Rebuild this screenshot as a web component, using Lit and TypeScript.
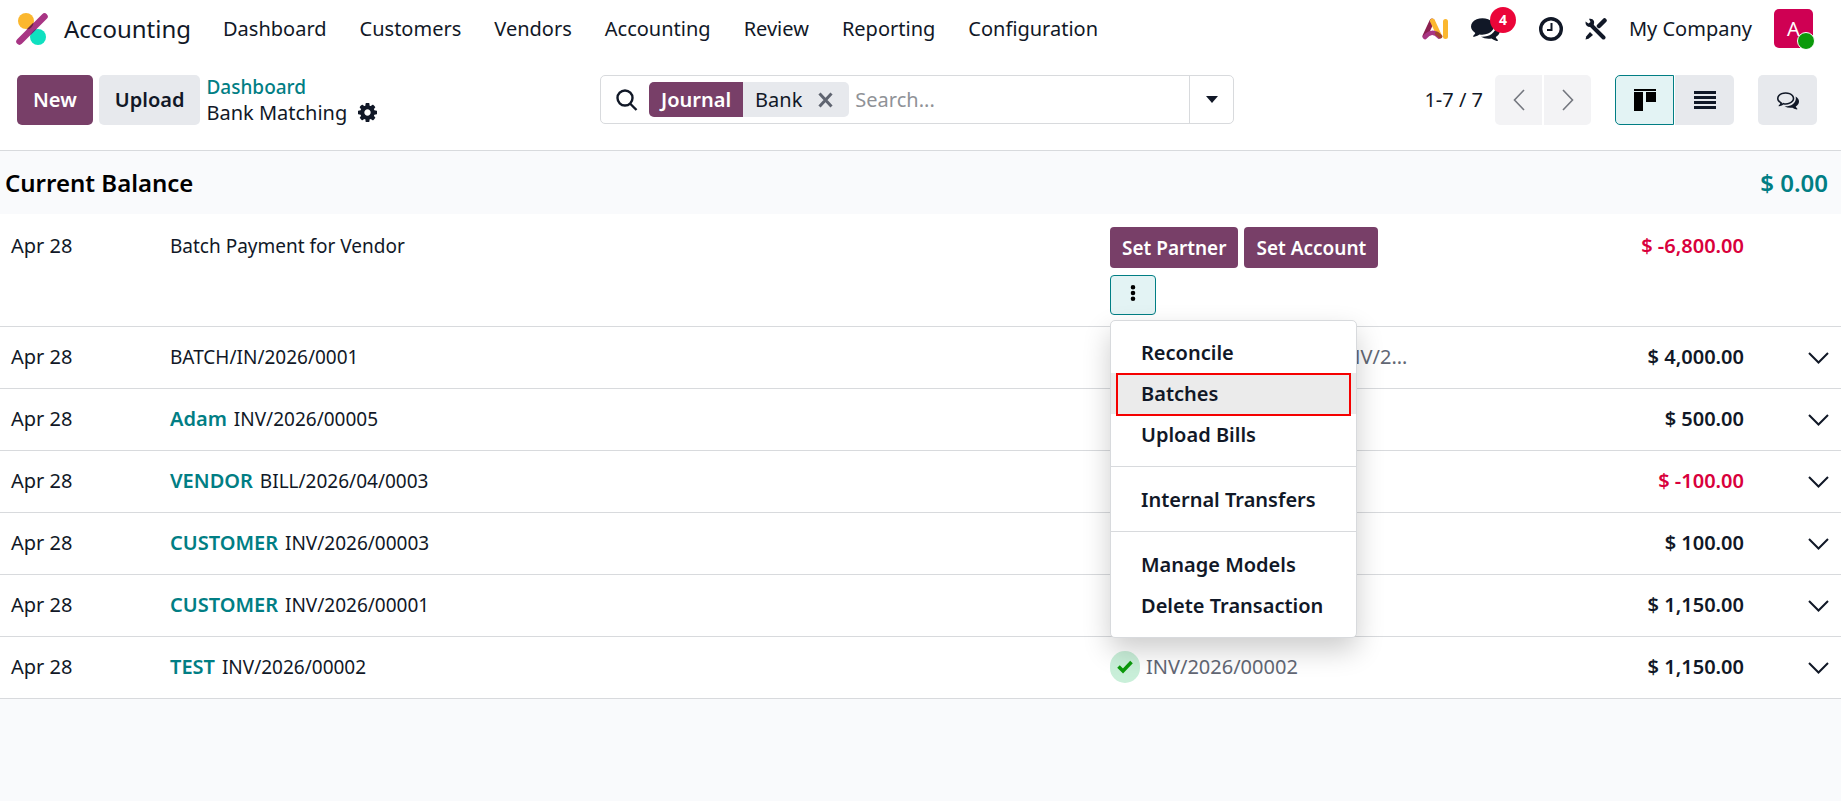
import { LitElement, html, css, nothing } from "lit";
import { customElement } from "lit/decorators.js";
import { classMap } from "lit/directives/class-map.js";

interface Line {
  partner?: string;
  label: string;
  amount: string;
  negative?: boolean;
  matched?: string;
  open?: boolean;
}

const LINES: Line[] = [
  { label: "Batch Payment for Vendor", amount: "$ -6,800.00", negative: true, open: true },
  { label: "BATCH/IN/2026/0001", amount: "$ 4,000.00", matched: "PBNK1/2026/00004, INV/2…" },
  { partner: "Adam", label: "INV/2026/00005", amount: "$ 500.00" },
  { partner: "VENDOR", label: "BILL/2026/04/0003", amount: "$ -100.00", negative: true },
  { partner: "CUSTOMER", label: "INV/2026/00003", amount: "$ 100.00" },
  { partner: "CUSTOMER", label: "INV/2026/00001", amount: "$ 1,150.00" },
  { partner: "TEST", label: "INV/2026/00002", amount: "$ 1,150.00", matched: "INV/2026/00002" },
];

const SECTIONS = ["Dashboard", "Customers", "Vendors", "Accounting", "Review", "Reporting", "Configuration"];
const MENU = [["Reconcile", "Batches", "Upload Bills"], ["Internal Transfers"], ["Manage Models", "Delete Transaction"]];

const BUBBLE =
  "M704 256q191 0 353.500 68.500t256.500 186.500 94 257-94 257-256.500 186.500-353.500 68.500q-86 0-176-16-124 88-278 128-36 9-86 16h-3q-11 0-20.500-8t-11.500-21q-1-3-1-6.500t.5-6.500 2-6l2.500-5 3.500-5.500 4-5 4.500-5 4-4.500q5-6 23-25t26-29.500 22.500-29 25-38.500 20.500-44q-124-72-195-177t-71-224q0-139 94-257t256.500-186.500 353.500-68.500z";
const BUBBLE_HOLE =
  "M704 384q-153 0-286 52t-211.500 141-78.500 191q0 82 53 158t149 132l97 56-35 84q34-20 62-39l44-31 53 10q78 14 153 14 153 0 286-52t211.500-141 78.500-191-78.500-191-211.500-141-286-52z";
const BUBBLE_BACK =
  "M1526 1425q10 24 20.500 44t25 38.500 22.500 29 26 29.500 23 25q1 1 4 4.500t4.500 5 4 5 3.500 5.500l2.500 5 2 6 .5 6.500-1 6.500q-3 14-13 22t-22 7q-50-7-86-16-154-40-278-128-90 16-176 16-271 0-472-132 58 4 88 4 161 0 309-45t264-129q125-92 192-212t67-254q0-77-23-152 129 71 204 178t75 230q0 120-71 224.500t-195 176.500z";
const COG =
  "M1024 896q0-106-75-181t-181-75-181 75-75 181 75 181 181 75 181-75 75-181zm512-109v222q0 12-8 23t-20 13l-185 28q-19 54-39 91 35 50 107 138 10 12 10 25t-9 23q-27 37-99 108t-94 71q-12 0-26-9l-138-108q-44 23-91 38-16 136-29 186-7 28-36 28h-222q-14 0-24.500-8.500t-11.500-21.500l-28-184q-49-16-90-37l-141 107q-10 9-25 9-14 0-25-11-126-114-165-168-7-10-7-23 0-12 8-23 15-21 51-66.500t54-70.500q-27-50-41-99l-183-27q-13-2-21-12.500t-8-23.500v-222q0-12 8-23t19-13l186-28q14-46 39-92-40-57-107-138-10-12-10-24 0-10 9-23 26-36 98.500-107.500t94.500-71.500q13 0 26 10l138 107q44-23 91-38 16-136 29-186 7-28 36-28h222q14 0 24.500 8.500t11.500 21.500l28 184q49 16 90 37l142-107q9-9 24-9 13 0 25 10 129 119 165 170 7 8 7 22 0 12-8 23-15 21-51 66.500t-54 70.500q26 50 41 98l183 28q13 2 21 12.500t8 23.500z";

const line = (w: number, h: number, d: string, width: number) => html`
  <svg width=${w} height=${h} viewBox="0 0 ${w} ${h}" aria-hidden="true">
    <path d=${d} fill="none" stroke="currentColor" stroke-width=${width} />
  </svg>
`;
const solid = (w: number, h: number, d: string) => html`
  <svg width=${w} height=${h} viewBox="0 0 ${w} ${h}" aria-hidden="true"><path d=${d} fill="currentColor" /></svg>
`;
const chat = (size: number, hollow = false) => html`
  <svg width=${size} height=${size} viewBox="0 0 1792 1792" aria-hidden="true">
    <path fill="currentColor" fill-rule="evenodd" d=${hollow ? BUBBLE + BUBBLE_HOLE : BUBBLE} />
    <path fill="currentColor" d=${BUBBLE_BACK} />
  </svg>
`;
const cog = html`
  <svg width="19" height="19" viewBox="0 128 1536 1536" aria-hidden="true"><path fill="currentColor" d=${COG} /></svg>
`;
const logo = html`
  <svg width="32" height="32" viewBox="0 0 32 32" aria-hidden="true">
    <circle cx="10" cy="8" r="8" fill="#fbb72e" />
    <circle cx="22" cy="24" r="8" fill="#0fe0c0" />
    <path d="M3.500 28.500L28.500 3.500" stroke="#a83584" stroke-width="6.500" stroke-linecap="round" />
    <path d="M10.500 16.500L17.500 9.500Q17.500 13 13.500 16Z" fill="#6a2440" />
    <path d="M14.500 22L21 15.500Q17 17 14.500 22Z" fill="#4a3078" />
  </svg>
`;
const aiMark = html`
  <svg width="27" height="22" viewBox="0 0 27 22" aria-hidden="true">
    <path d="M3 18L10 3" stroke="#8c1f4f" stroke-width="5" stroke-linecap="round" />
    <path d="M10.500 3L17 17" stroke="#fbb72e" stroke-width="5" stroke-linecap="round" />
    <path d="M3 19Q10 11 17 18.500" fill="none" stroke="#a83584" stroke-width="4.500" stroke-linecap="round" />
    <path d="M15 15.500L18.500 18.500" stroke="#a1442d" stroke-width="4" stroke-linecap="round" />
    <path d="M23.500 3.500V18.500" stroke="#fbb72e" stroke-width="5" stroke-linecap="round" />
  </svg>
`;
const clock = html`
  <svg width="24" height="24" viewBox="0 0 24 24" aria-hidden="true">
    <circle cx="12" cy="12" r="10.300" fill="none" stroke="currentColor" stroke-width="3.400" />
    <path d="M12.500 6V13H8" fill="none" stroke="currentColor" stroke-width="2" />
  </svg>
`;
const tools = html`
  <svg width="22" height="22" viewBox="0 0 22 22" aria-hidden="true">
    <path d="M6 7L18.500 19.500" stroke="currentColor" stroke-width="4" stroke-linecap="round" />
    <path d="M.5 3.500L3.500 5.500L5.500 4L4 .800Q7.500 0 9 3Q9.500 5 8.500 7.500L7 9Q3 9.500 1.500 7.500Q.3 6 .5 3.500Z" fill="currentColor" />
    <path d="M14 8L19.500 2.500" stroke="currentColor" stroke-width="4.500" stroke-linecap="round" />
    <path d="M5 14L8 17L3.500 20.800L.5 21.500L1.200 18.500Z" fill="currentColor" />
  </svg>
`;

@customElement("app-root")
export class AppRoot extends LitElement {
  static styles = css`
    :host {
      --ink: #111827;
      --brand: #783f68;
      --teal: #017e84;
      --line: #d8dadd;
      --soft: #e7e9ed;
      display: block;
      min-height: 100vh;
      background: #f9fafc;
      color: var(--ink);
      font: 400 19px/28px "Noto Sans", "Open Sans", sans-serif;
    }
    * { box-sizing: border-box; }
    svg { display: block; flex: none; }
    a { color: inherit; text-decoration: none; }
    button { font: inherit; color: inherit; border: 0; background: none; padding: 0; cursor: pointer; }

    .navbar { display: flex; align-items: center; height: 57px; padding: 0 24px 0 16px; background: #fff; font-size: 20px; }
    .brand { display: flex; align-items: center; gap: 16px; font-size: 24px; margin-right: 32px; }
    .sections { display: flex; gap: 33px; flex: 1; }
    .systray { display: flex; align-items: center; gap: 22px; }
    .chat { position: relative; margin-right: 17px; }
    .count {
      position: absolute; left: 19px; top: -7px; width: 26px; height: 26px; border-radius: 13px;
      background: #eb0539; color: #fff; font-size: 14px; line-height: 26px; font-weight: 700;
    }
    .avatar {
      position: relative; width: 39px; height: 39px; margin-right: 4px; border-radius: 5px;
      background: #cf0053; color: #fff; line-height: 39px;
    }
    .online {
      position: absolute; right: -2px; bottom: -2px; width: 18px; height: 18px; border-radius: 50%;
      background: #0b9a0b; border: 1px solid #fff;
    }

    .panel {
      display: grid; grid-template-columns: minmax(0, 1fr) minmax(0, 634px) minmax(0, 1fr);
      align-items: center; height: 94px; padding: 0 24px 8px 17px; border-bottom: 1px solid var(--line); background: #fff;
    }
    .side { display: flex; align-items: center; }
    .end { justify-content: flex-end; font-size: 20px; }
    .btn { height: 50px; padding: 0 16px; border-radius: 5px; background: var(--soft); font-weight: 600; font-size: 20px; }
    .new { margin-right: 6px; background: var(--brand); color: #fff; }
    .crumbs { margin-left: 6px; line-height: 26px; white-space: nowrap; }
    .crumb-link { display: block; color: var(--teal); font-weight: 500; }
    .here { display: flex; align-items: center; gap: 11px; font-size: 20px; }

    .search { display: flex; align-items: center; height: 49px; padding-left: 15px; border: 1px solid var(--line); border-radius: 5px; }
    .facet {
      display: flex; align-items: center; height: 35px; margin-left: 11px; border-radius: 5px;
      background: var(--soft); overflow: hidden; line-height: 35px; font-size: 20px;
    }
    .facet-name { padding: 0 12px; background: var(--brand); color: #fff; font-weight: 600; }
    .facet-value { padding: 0 16px 0 12px; }
    .facet-remove { padding-right: 16px; color: #5f6470; }
    .query { flex: 1; min-width: 0; padding: 0 6px; border: 0; outline: 0; background: none; font: inherit; font-size: 20px; }
    .query::placeholder { color: #8f9297; opacity: 1; }
    .toggle { display: grid; place-items: center; width: 44px; height: 47px; border-left: 1px solid var(--line); }

    .pager { display: flex; gap: 2px; margin: 0 24px 0 12px; color: #74777f; }
    .views { display: flex; gap: 1px; margin-right: 24px; }
    .cell { display: grid; place-items: center; height: 50px; }
    .page { width: 47px; background: #f3f3f5; }
    .view { width: 59px; background: var(--soft); }
    .first { border-radius: 5px 0 0 5px; }
    .last { border-radius: 0 5px 5px 0; }
    .round { border-radius: 5px; }
    .active { background: #e3f3f4; border: 1px solid var(--teal); color: #000; }

    .balance {
      display: flex; justify-content: space-between; align-items: center; height: 63px; padding: 0 13px 0 5px;
      font-size: 24px; font-weight: 600; color: #000;
    }
    .balance-title { margin: 0; font: inherit; }
    .total { color: var(--teal); }

    .lines { width: 100%; table-layout: fixed; border-collapse: collapse; background: #fff; }
    .line { height: 62px; border-bottom: 1px solid var(--line); }
    .line td { padding: 0; white-space: nowrap; }
    .line .date { width: 170px; padding-left: 11px; font-size: 20px; }
    .line .work { width: 300px; }
    .line .amount { width: 334px; text-align: right; font-weight: 600; font-size: 20px; }
    .line .fold { width: 97px; padding-left: 64px; }
    .line.open { height: 112px; }
    .open td { vertical-align: top; padding-top: 18px; }
    .open .work { padding-top: 13px; }
    .partner { margin-right: 2px; color: var(--teal); font-weight: 600; font-size: 20px; }
    .line .red { color: #d9003c; }
    .match { display: flex; align-items: center; gap: 6px; color: #626774; font-size: 20px; }
    .done {
      display: grid; place-items: center; flex: none; width: 30px; height: 32px; border-radius: 16px;
      background: #c9efd9; color: #0b9a0b;
    }

    .actions { display: flex; flex-wrap: wrap; gap: 6px; position: relative; height: 88px; }
    .set { height: 41px; padding: 0 12px; border-radius: 4px; background: var(--brand); color: #fff; font-weight: 600; }
    .more { display: grid; place-items: center; width: 46px; height: 40px; padding-bottom: 3px; border-radius: 4px; }
    .menu {
      position: absolute; left: 0; top: 93px; z-index: 2; width: 247px; padding: 11px 0; background: #fff;
      border: 1px solid var(--line); border-radius: 5px; box-shadow: 0 12px 28px rgba(0, 0, 0, 0.2);
    }
    .item { display: block; width: 100%; height: 41px; padding-left: 30px; text-align: left; font-weight: 600; font-size: 20px; }
    .picked { position: relative; background: #ebebeb; }
    .picked::after { content: ""; position: absolute; inset: 0 5px -2px; border: 2px solid #f50000; }
    .rule { margin: 11px 0 12px; border: 0; border-top: 1px solid var(--line); }
  `;

  private renderNavbar() {
    return html`
      <header class="navbar">
        <a class="brand" href="#">${logo}<span>Accounting</span></a>
        <nav class="sections">${SECTIONS.map((name) => html`<a href="#">${name}</a>`)}</nav>
        <div class="systray">
          <button aria-label="Ask AI">${aiMark}</button>
          <button class="chat" aria-label="Messages">${chat(29)}<span class="count">4</span></button>
          <button aria-label="Activities">${clock}</button>
          <button aria-label="Tools">${tools}</button>
          <button>My Company</button>
          <button class="avatar" aria-label="Account">A<span class="online"></span></button>
        </div>
      </header>
    `;
  }

  private renderPanel() {
    return html`
      <div class="panel">
        <div class="side">
          <button class="btn new">New</button>
          <button class="btn">Upload</button>
          <div class="crumbs">
            <a class="crumb-link" href="#">Dashboard</a>
            <div class="here"><span>Bank Matching</span><button aria-label="Settings">${cog}</button></div>
          </div>
        </div>
        <div class="search" role="search">
          ${line(22, 22, "M9 1.500A7.500 7.500 0 1 0 9 16.500A7.500 7.500 0 1 0 9 1.500M14 14.500L20.500 21", 2.4)}
          <div class="facet">
            <span class="facet-name">Journal</span>
            <span class="facet-value">Bank</span>
            <button class="facet-remove" aria-label="Remove">${line(15, 16, "M1.500 1.500L13.500 14.500M13.500 1.500L1.500 14.500", 3)}</button>
          </div>
          <input class="query" type="text" placeholder="Search..." aria-label="Search" />
          <button class="toggle" aria-label="Search options">${solid(12, 7, "M0 0H12L6 7Z")}</button>
        </div>
        <div class="side end">
          <span>1-7 / 7</span>
          <div class="pager">
            <button class="cell page first" aria-label="Previous">${line(12, 22, "M11 1L1.500 11L11 21", 1.6)}</button>
            <button class="cell page last" aria-label="Next">${line(12, 22, "M1 1L10.500 11L1 21", 1.6)}</button>
          </div>
          <div class="views">
            <button class="cell view first active" aria-label="Kanban">${solid(22, 22, "M0 0H22V2H0ZM0 3H9V22H0ZM12 3H22V13H12Z")}</button>
            <button class="cell view last" aria-label="List">${solid(22, 18, "M0 0H22V3H0ZM0 5H22V8H0ZM0 10H22V13H0ZM0 15H22V18H0Z")}</button>
          </div>
          <button class="cell view round" aria-label="Discuss">${chat(22, true)}</button>
        </div>
      </div>
    `;
  }

  private renderActions() {
    return html`
      <div class="actions">
        <button class="set">Set Partner</button>
        <button class="set">Set Account</button>
        <button class="more active" aria-label="More actions">
          ${solid(6, 16, "M3 0A2.300 2.300 0 1 0 3 4.600A2.300 2.300 0 1 0 3 0M3 5.700A2.300 2.300 0 1 0 3 10.300A2.300 2.300 0 1 0 3 5.700M3 11.400A2.300 2.300 0 1 0 3 16A2.300 2.300 0 1 0 3 11.400")}
        </button>
        <div class="menu">
          ${MENU.map(
            (group, i) => html`
              ${i ? html`<hr class="rule" />` : nothing}
              ${group.map((name) => html`<button class=${classMap({ item: true, picked: name === "Batches" })}>${name}</button>`)}
            `
          )}
        </div>
      </div>
    `;
  }

  private renderWork(row: Line) {
    if (row.open) return this.renderActions();
    if (!row.matched) return nothing;
    return html`
      <div class="match">
        <span class="done">${line(16, 14, "M1.500 6.500L6 11L14.500 2", 3.6)}</span>
        <span>${row.matched}</span>
      </div>
    `;
  }

  render() {
    return html`
      ${this.renderNavbar()} ${this.renderPanel()}
      <section class="balance"><h2 class="balance-title">Current Balance</h2><span class="total">$ 0.00</span></section>
      <table class="lines">
        <tbody>
          ${LINES.map(
            (row) => html`
              <tr class=${classMap({ line: true, open: !!row.open })}>
                <td class="date">Apr 28</td>
                <td>${row.partner ? html`<a class="partner" href="#">${row.partner}</a> ` : nothing}${row.label}</td>
                <td class="work">${this.renderWork(row)}</td>
                <td class=${classMap({ amount: true, red: !!row.negative })}>${row.amount}</td>
                <td class="fold">
                  ${row.open ? nothing : html`<button aria-label="Unfold">${line(21, 12, "M1 1L10.500 10.500L20 1", 2)}</button>`}
                </td>
              </tr>
            `
          )}
        </tbody>
      </table>
    `;
  }
}
